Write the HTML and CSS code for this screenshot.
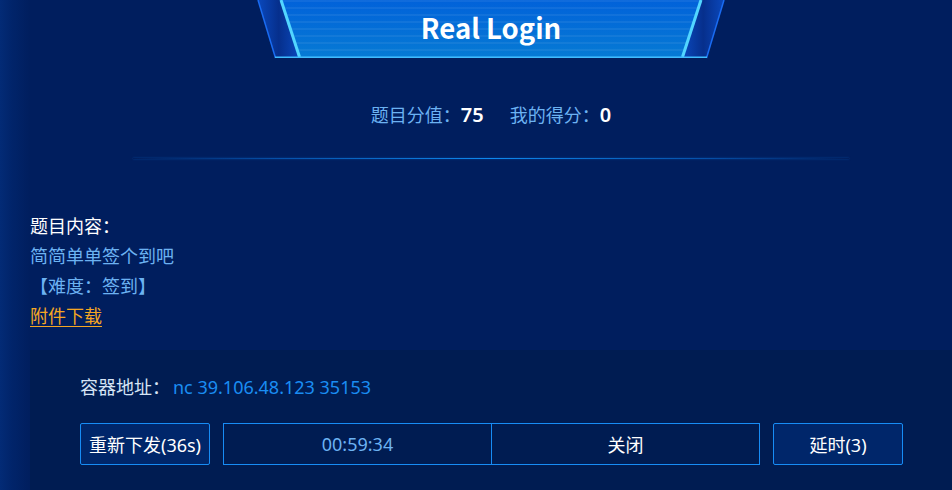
FILE: index.html
```html
<!DOCTYPE html>
<html lang="zh-CN">
<head>
<meta charset="utf-8">
<title>Real Login</title>
<link rel="stylesheet" href="styles.css">
</head>
<body>
<div class="page">
  <header class="head">
    <div class="badge">
      <svg class="badge-bg" width="480" height="60" viewBox="0 0 480 60" aria-hidden="true">
        <defs>
          <linearGradient id="panel" x1="0" y1="0" x2="0" y2="1">
            <stop offset="0" stop-color="#0162da"/>
            <stop offset="1" stop-color="#067ad4"/>
          </linearGradient>
          <linearGradient id="bandL" x1="0" y1="0" x2="1" y2="0">
            <stop offset="0" stop-color="#0a48bc"/>
            <stop offset="0.5" stop-color="#062f8c"/>
            <stop offset="1" stop-color="#0a48bc"/>
          </linearGradient>
          <pattern id="stripes" width="8" height="7" patternUnits="userSpaceOnUse">
            <rect x="0" y="0" width="8" height="2" fill="#ffffff" fill-opacity="0.06"/>
          </pattern>
        </defs>
        <polygon points="7,0 30,0 48.5,58 24.5,58" fill="url(#bandL)"/>
        <polygon points="450,0 473,0 455.5,58 431.5,58" fill="url(#bandL)"/>
        <polygon points="29,0 451,0 432.5,57 47.5,57" fill="url(#panel)"/>
        <polygon points="29,0 451,0 432.5,57 47.5,57" fill="url(#stripes)"/>
        <line x1="7" y1="0" x2="24.5" y2="58" stroke="#1a6cf2" stroke-width="1.5"/>
        <line x1="473" y1="0" x2="455.5" y2="58" stroke="#1a6cf2" stroke-width="1.5"/>
        <line x1="30" y1="0" x2="48.5" y2="57" stroke="#52d6ff" stroke-width="3"/>
        <line x1="450" y1="0" x2="431.5" y2="57" stroke="#52d6ff" stroke-width="3"/>
        <line x1="24" y1="57.2" x2="456" y2="57.2" stroke="#3fbcff" stroke-width="1.6"/>
      </svg>
      <h1 class="title">Real Login</h1>
    </div>
  </header>

  <div class="scores">
    <span class="s-label">题目分值：</span><span class="s-value s-gap">75</span>
    <span class="s-label">我的得分：</span><span class="s-value">0</span>
  </div>

  <div class="divider"></div>

  <section class="desc">
    <div class="desc-title">题目内容：</div>
    <div class="desc-text">简简单单签个到吧</div>
    <div class="desc-text">【难度：签到】</div>
    <div><a class="attach" href="#">附件下载</a></div>
  </section>

  <section class="box">
    <div class="addr">
      <span class="addr-label">容器地址：</span><span class="addr-value">nc 39.106.48.123 35153</span>
    </div>
    <div class="actions">
      <button class="btn">重新下发(36s)</button>
      <div class="group">
        <div class="g-cell g-time">00:59:34</div>
        <div class="g-cell g-close">关闭</div>
      </div>
      <button class="btn">延时(3)</button>
    </div>
  </section>
</div>
</body>
</html>
```

FILE: styles.css
```css
* { box-sizing: border-box; }

html, body {
  margin: 0;
  padding: 0;
  height: 100%;
}

body {
  background: linear-gradient(to right, #032b76 0, #01246a 12px, #001e5e 30px, #001e5e 100%);
  font-family: "Noto Sans", "Noto Sans CJK SC", sans-serif;
  font-size: 18px;
  color: #ffffff;
  overflow: hidden;
}

.page {
  padding-left: 30px;
  width: 952px;
}

.head {
  display: flex;
  justify-content: center;
  height: 58px;
}

.badge {
  position: relative;
  width: 480px;
  height: 58px;
  display: flex;
  justify-content: center;
}

.badge-bg {
  position: absolute;
  left: 0;
  top: 0;
}

.title {
  position: relative;
  margin: 0;
  font-family: "Noto Sans CJK SC", sans-serif;
  font-weight: 700;
  font-size: 27.5px;
  line-height: 54px;
  color: #ffffff;
}

.scores {
  margin-top: 42px;
  height: 30px;
  display: flex;
  justify-content: center;
  align-items: center;
  line-height: 30px;
}

.s-label {
  color: #6cb2f2;
  font-size: 18px;
}

.s-value {
  color: #ffffff;
  font-size: 20px;
  font-weight: 600;
}

.s-gap {
  margin-right: 26px;
}

.divider {
  margin: 28px auto 0;
  width: 716px;
  height: 1px;
  background: linear-gradient(to right, rgba(10, 120, 230, 0) 0, rgba(10, 120, 230, 0.55) 20%, #0e88ee 50%, rgba(10, 120, 230, 0.55) 80%, rgba(10, 120, 230, 0) 100%);
  box-shadow: 0 0 2px rgba(14, 136, 238, 0.5);
}

.desc {
  margin-top: 52px;
  line-height: 30px;
}

.desc-title {
  color: #ffffff;
}

.desc-text {
  color: #6cb2f2;
}

.attach {
  color: #f5a623;
  text-decoration: underline;
  text-underline-offset: 3px;
}

.box {
  margin-top: 19px;
  background: #001c52;
  padding: 25px 0 25px 50px;
  height: 160px;
}

.addr {
  line-height: 24px;
}

.addr-label {
  color: #d6e4f5;
}

.addr-value {
  color: #1a8df2;
  margin-left: 3px;
}

.actions {
  margin-top: 24px;
  display: flex;
  gap: 13px;
}

.btn {
  width: 130px;
  height: 42px;
  border: 1px solid #178cf5;
  border-radius: 2px;
  background: #00266a;
  color: #ffffff;
  font-family: "Noto Sans", "Noto Sans CJK SC", sans-serif;
  font-size: 18px;
  padding: 0;
  cursor: pointer;
}

.group {
  width: 537px;
  height: 42px;
  border: 1px solid #178cf5;
  display: flex;
}

.g-cell {
  flex: 1;
  display: flex;
  align-items: center;
  justify-content: center;
}

.g-time {
  color: #6cb2f2;
  border-right: 1px solid #178cf5;
}

.g-close {
  color: #ffffff;
}
```
